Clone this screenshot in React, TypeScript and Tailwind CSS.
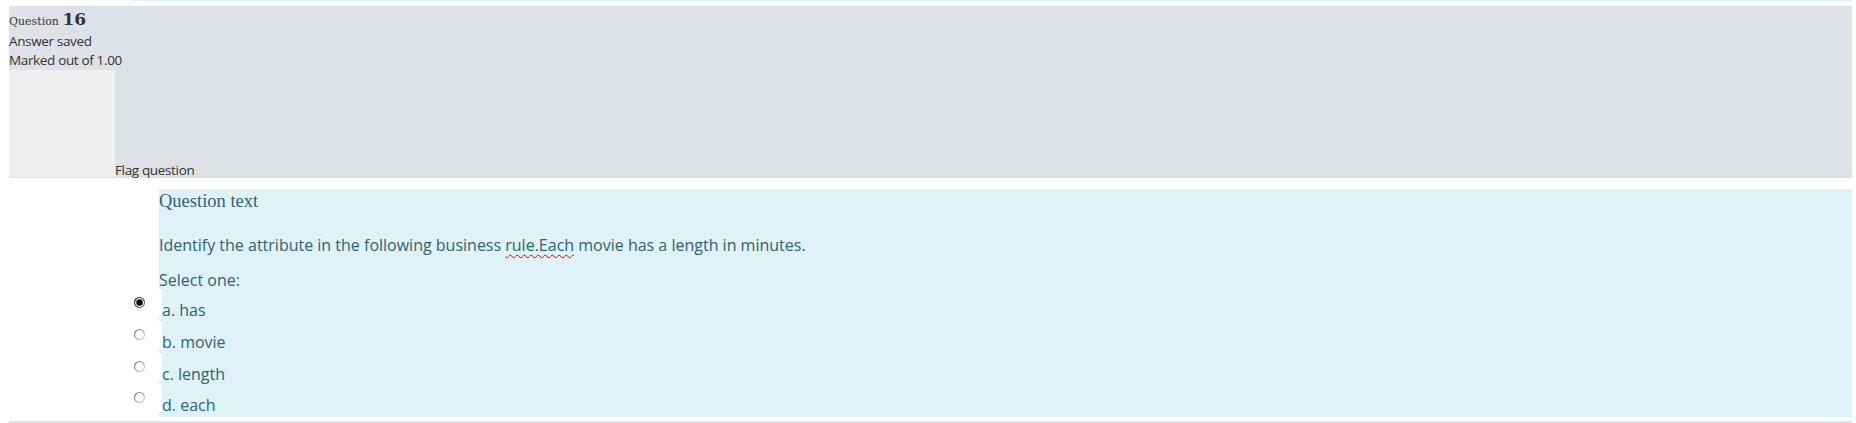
import React from "react";

const options = [
  { label: "a. has", checked: true },
  { label: "b. movie", checked: false },
  { label: "c. length", checked: false },
  { label: "d. each", checked: false },
];

function Radio({ checked }: { checked: boolean }) {
  return (
    <svg width="13" height="13" viewBox="0 0 13 13">
      <defs>
        <linearGradient id={checked ? "rc" : "ru"} x1="0" y1="0" x2="1" y2="1">
          <stop offset="0" stopColor={checked ? "#222" : "#6f6f6f"} />
          <stop offset="1" stopColor={checked ? "#888" : "#e2e2e2"} />
        </linearGradient>
      </defs>
      <circle cx="6.5" cy="6.5" r="5" fill="#fff" stroke={`url(#${checked ? "rc" : "ru"})`} strokeWidth="1.2" />
      {checked && <circle cx="6.5" cy="6.5" r="3.2" fill="#000" />}
    </svg>
  );
}

export default function App() {
  return (
    <div className="w-[1856px] h-[423px] overflow-hidden bg-white text-[#333]">
      {/* tail of the previous question */}
      <div className="ml-[132px] mr-[4px] h-[1px] bg-[#def2f8]" />

      <div className="mt-[5px] ml-[9px] mr-[4px] h-[172px] bg-[#dee2e6] pt-[1px]">
        <div className="leading-[24px] text-[#333]" style={{ fontFamily: '"DejaVu Serif", serif' }}>
          <span className="text-[11px]">Question </span>
          <span className="text-[17px] font-bold">16</span>
        </div>
        <div className="-mt-[2px] font-['Open_Sans',sans-serif] text-[13.5px] leading-[19px] tracking-[-0.35px]">
          <div>Answer saved</div>
          <div>Marked out of 1.00</div>
          <div className="flex items-end">
            <div className="w-[106px] h-[107px] bg-[#efefef]" />
            <span className="leading-[16px] -mb-[1px]">Flag question</span>
          </div>
        </div>
      </div>

      <div className="mt-[11px] ml-[159px] mr-[4px] h-[228px] bg-[#def2f8] text-[#2f6473]">
        <h4 className="font-['Liberation_Serif',serif] text-[18.5px] leading-[24px]">Question text</h4>
        <div className="font-['Open_Sans',sans-serif] text-[16px]">
          <p className="mt-[20px] leading-[24px]">
            Identify the attribute in the following business{" "}
            <span className="underline decoration-wavy decoration-[#e00000] decoration-1 underline-offset-[3px]">
              rule.Each
            </span>{" "}
            movie has a length in minutes.
          </p>
          <p className="mt-[13px] leading-[20px]">Select one:</p>
          <div className="-ml-[27px]">
            {options.map((o) => (
              <div key={o.label} className="flex h-[31.75px]">
                <div className="w-[30px] h-[27px] bg-white pl-[1px] pt-[6px]">
                  <Radio checked={o.checked} />
                </div>
                <div className="pt-[10px] leading-[20px]">{o.label}</div>
              </div>
            ))}
          </div>
        </div>
      </div>

      <div className="mt-[4px] ml-[9px] mr-[4px] h-[4px] bg-[#dee2e6]" />
    </div>
  );
}
